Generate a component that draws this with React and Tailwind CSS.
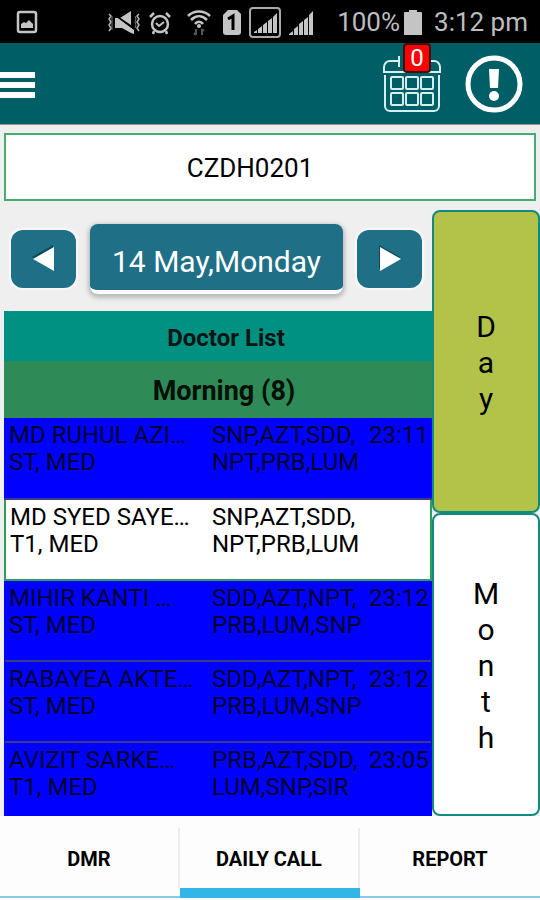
const visits = [
  {
    name: "MD RUHUL AZI…",
    info: "ST, MED",
    products: ["SNP,AZT,SDD,", "NPT,PRB,LUM"],
    time: "23:11",
  },
  {
    name: "MD SYED SAYE…",
    info: "T1, MED",
    products: ["SNP,AZT,SDD,", "NPT,PRB,LUM"],
    time: "",
  },
  {
    name: "MIHIR KANTI …",
    info: "ST, MED",
    products: ["SDD,AZT,NPT,", "PRB,LUM,SNP"],
    time: "23:12",
  },
  {
    name: "RABAYEA AKTE…",
    info: "ST, MED",
    products: ["SDD,AZT,NPT,", "PRB,LUM,SNP"],
    time: "23:12",
  },
  {
    name: "AVIZIT SARKE…",
    info: "T1, MED",
    products: ["PRB,AZT,SDD,", "LUM,SNP,SIR"],
    time: "23:05",
  },
];

const tabs = [
  { label: "DMR", active: false },
  { label: "DAILY CALL", active: true },
  { label: "REPORT", active: false },
];

const PictureIcon = () => (
  <svg width="22" height="24" viewBox="0 0 22 24" fill="none">
    <rect x="2" y="2" width="18" height="20" rx="2" stroke="#c4c4c4" strokeWidth="2.5" />
    <path d="M5 18v-4l3-2 2 1 3-3 3 3 1 1v4z" fill="#c4c4c4" />
  </svg>
);

const MuteIcon = () => (
  <svg width="34" height="24" viewBox="0 0 34 24" fill="none">
    <path
      d="M2 3l2 2-2 3 2 3-2 3 2 3-2 3M32 3l-2 2 2 3-2 3 2 3-2 3 2 3"
      stroke="#b5b5b5"
      strokeWidth="1.5"
    />
    <path d="M5 5v14M28 5l1 3-1 3 1 3-1 3" stroke="#777" strokeWidth="1" />
    <path d="M13 7l11-7v14z" fill="#c4c4c4" />
    <path d="M8 7h3l16 12v4l-3-1-9-5H8z" fill="#c4c4c4" />
    <path d="M11 6l15 11" stroke="#000" strokeWidth="1.5" />
  </svg>
);

const AlarmIcon = () => (
  <svg width="22" height="24" viewBox="0 0 22 24" fill="none" stroke="#c4c4c4">
    <circle cx="11" cy="13" r="8" strokeWidth="2.5" />
    <path d="M7 12l3 3 5-4" strokeWidth="2" />
    <path d="M1 6l4-4M21 6l-4-4M5 20l-1 3M17 20l1 3" strokeWidth="2.5" />
  </svg>
);

const WifiIcon = () => (
  <svg width="24" height="26" viewBox="0 0 24 26" fill="none">
    <path
      d="M1 6c6-6 16-6 22 0M4 10c5-5 11-5 16 0M8 14c2-3 6-3 8 0"
      stroke="#c4c4c4"
      strokeWidth="2.5"
    />
    <circle cx="12" cy="16" r="2" fill="#c4c4c4" />
    <path d="M9 19v6M7 23l2 2M15 25v-6M17 21l-2-2" stroke="#555" strokeWidth="2" />
  </svg>
);

const SimIcon = () => (
  <svg width="18" height="25" viewBox="0 0 18 25">
    <path d="M5 0h9l4 4v18a3 3 0 0 1-3 3H3a3 3 0 0 1-3-3V5z" fill="#c4c4c4" />
    <path d="M5 9l5-3v14" fill="none" stroke="#000" strokeWidth="3" />
  </svg>
);

const BoxedSignalIcon = () => (
  <svg width="32" height="31" viewBox="0 0 32 31">
    <rect x="1" y="1" width="30" height="29" rx="3" fill="none" stroke="#aaa" strokeWidth="2" />
    <path
      d="M5 26v-1l3-2v3zM9 26v-4l4-3v7zM14 26v-8l4-3v11zM19 26v-12l4-3v15zM24 26v-16l4-4v20z"
      fill="#c4c4c4"
    />
  </svg>
);

const SignalIcon = () => (
  <svg width="24" height="24" viewBox="0 0 24 24">
    <path
      d="M0 24v-1l4-3v4zM5 24v-6l4-3v9zM10 24v-11l4-3v14zM15 24v-15l4-3v18zM20 24v-20l4-4v24z"
      fill="#c4c4c4"
    />
  </svg>
);

const BatteryIcon = () => (
  <svg width="18" height="25" viewBox="0 0 18 25">
    <path d="M5 0h8v2h4a1 1 0 0 1 1 1v22H0V3a1 1 0 0 1 1-1h4z" fill="#c4c4c4" />
  </svg>
);

const CalendarIcon = () => (
  <svg width="58" height="58" viewBox="0 0 58 58" fill="none" stroke="#d5eeee" strokeWidth="2">
    <path d="M15 6H7a6 6 0 0 0-6 6v5h56v-5a6 6 0 0 0-6-6h-8" />
    <path d="M16 1v11M42 1v11" />
    <path d="M2 20v31a5 5 0 0 0 5 5h44a5 5 0 0 0 5-5V20" />
    {[22, 38].map((y) =>
      [8, 23, 38].map((x) => (
        <rect key={`${x}-${y}`} x={x} y={y} width="12" height="12" rx="1" />
      ))
    )}
  </svg>
);

const AlertIcon = () => (
  <svg width="58" height="58" viewBox="0 0 58 58">
    <circle cx="29" cy="29" r="26" fill="none" stroke="#fff" strokeWidth="5" />
    <path d="M24 14h10l-1 19h-8z" fill="#fff" />
    <circle cx="29" cy="41" r="5" fill="#fff" />
  </svg>
);

const StatusBar = () => (
  <div className="flex h-[43px] shrink-0 items-center justify-between bg-black px-3 pl-4 text-[26px] text-[#bdbdbd]">
    <PictureIcon />
    <div className="flex items-center pt-[2px]">
      <MuteIcon />
      <span className="ml-2">
        <AlarmIcon />
      </span>
      <span className="ml-4">
        <WifiIcon />
      </span>
      <span className="ml-3">
        <SimIcon />
      </span>
      <span className="ml-2">
        <BoxedSignalIcon />
      </span>
      <span className="ml-2">
        <SignalIcon />
      </span>
      <span className="ml-6">100%</span>
      <span className="ml-1">
        <BatteryIcon />
      </span>
      <span className="ml-3">3:12 pm</span>
    </div>
  </div>
);

const Header = () => (
  <header className="flex h-[82px] shrink-0 items-center justify-between border-b border-[#8f9a9c] bg-[#005f66] pr-[17px]">
    <button aria-label="Menu" className="flex w-[35px] flex-col gap-1 pt-[2px]">
      <span className="h-[6px] w-full bg-white" />
      <span className="h-[6px] w-full bg-white" />
      <span className="h-[6px] w-full bg-white" />
    </button>
    <div className="flex items-center gap-6">
      <button aria-label="Calendar" className="relative">
        <CalendarIcon />
        <span className="absolute -top-3 left-5 flex h-[30px] w-[28px] items-center justify-center rounded-sm border-2 border-[#3a1010] bg-[#ff0000] text-[24px] text-white">
          0
        </span>
      </button>
      <button aria-label="Alerts">
        <AlertIcon />
      </button>
    </div>
  </header>
);

const ArrowButton = ({ label, path }) => (
  <button
    aria-label={label}
    className="flex h-[58px] w-[65px] items-center justify-center rounded-xl bg-[#1f6f87] shadow-[0_0_2px_2px_#f8f8f8]"
  >
    <svg width="24" height="28" viewBox="0 0 24 28">
      <path d={path} fill="#0e4a5c" transform="translate(-1 -2)" />
      <path d={path} fill="#fff" />
    </svg>
  </button>
);

const DateNav = () => (
  <div className="flex h-[101px] shrink-0 items-center gap-[14px] pr-[10px] pb-1 pl-[7px]">
    <ArrowButton label="Previous day" path="M1 14L22 2v24z" />
    <button className="h-[70px] flex-1 rounded-lg border-b-4 border-white bg-[#1f6f87] pt-[10px] text-[30px] text-white shadow-[0_2px_4px_2px_#bbbbbb]">
      14 May,Monday
    </button>
    <ArrowButton label="Next day" path="M23 14L2 2v24z" />
  </div>
);

const VisitRow = ({ visit }) => {
  const done = visit.time !== "";
  return (
    <tr
      className={
        done
          ? "h-[81px] border-b-2 border-[#3b3b8c] bg-[#0000ff] text-[#000030]"
          : "h-[81px] border-2 border-[#2f9e5c] bg-white text-black"
      }
    >
      <td className="pt-1 pl-1 align-top">
        {visit.name}
        <br />
        {visit.info}
      </td>
      <td className="pt-1 align-top">
        {visit.products[0]}
        <br />
        {visit.products[1]}
      </td>
      <td className="pt-1 align-top">{visit.time}</td>
    </tr>
  );
};

const DoctorList = () => (
  <section className="flex min-h-0 flex-1 flex-col">
    <h2 className="flex h-[50px] shrink-0 items-center justify-center bg-[#009182] pt-1 pl-4 text-[24px] font-bold text-[#0a1414]">
      Doctor List
    </h2>
    <h3 className="flex h-[57px] shrink-0 items-center justify-center bg-[#2e8b57] pt-1 pl-3 text-[27px] font-bold text-[#061006]">
      Morning (8)
    </h3>
    <div className="min-h-0 flex-1 overflow-hidden bg-[#0000ff]">
      <table className="w-full table-fixed border-collapse text-[24px] leading-[27px] whitespace-nowrap">
        <colgroup>
          <col />
          <col className="w-[157px]" />
          <col className="w-[62px]" />
        </colgroup>
        <tbody>
          {visits.map((visit) => (
            <VisitRow key={visit.name} visit={visit} />
          ))}
        </tbody>
      </table>
    </div>
  </section>
);

const PeriodButton = ({ label, active }) => (
  <button
    aria-label={label}
    className={
      active
        ? "flex flex-1 flex-col items-center justify-center rounded-lg border-2 border-[#128a80] bg-[#b3c34a] pt-[2px] text-[30px] leading-[36px]"
        : "flex flex-1 flex-col items-center justify-center rounded-lg border-2 border-[#128a80] bg-white pt-[2px] text-[30px] leading-[36px]"
    }
  >
    {label.split("").map((letter, i) => (
      <span key={i}>{letter}</span>
    ))}
  </button>
);

const TabBar = () => (
  <nav className="flex h-[84px] shrink-0 bg-[#fdfdfd] pb-[2px]">
    {tabs.map(({ label, active }, i) => (
      <button key={label} className="flex flex-1 flex-col text-xl font-bold">
        <span
          className={
            i < tabs.length - 1
              ? "mt-3 flex h-[60px] w-full items-center justify-center border-r-2 border-[#ececec] pt-[2px]"
              : "mt-3 flex h-[60px] w-full items-center justify-center pt-[2px]"
          }
        >
          {label}
        </span>
        <span
          className={
            active ? "h-[10px] w-full bg-[#33b5e5]" : "mt-2 h-[2px] w-full bg-[#8cc8ea]"
          }
        />
      </button>
    ))}
  </nav>
);

export default function App() {
  return (
    <div className="flex h-screen flex-col bg-[#efefef] font-['Roboto',sans-serif] text-black">
      <StatusBar />
      <Header />
      <div className="shrink-0 px-1 pt-2">
        <input
          type="text"
          aria-label="Territory code"
          defaultValue="CZDH0201"
          className="block h-[68px] w-full border-2 border-[#45ad72] bg-white pt-[2px] pr-10 text-center text-[26px]"
        />
      </div>
      <main className="flex min-h-0 flex-1 pt-[9px] pl-1">
        <div className="flex min-w-0 flex-1 flex-col">
          <DateNav />
          <DoctorList />
        </div>
        <div className="flex w-[108px] shrink-0 flex-col">
          <PeriodButton label="Day" active />
          <PeriodButton label="Month" />
        </div>
      </main>
      <TabBar />
    </div>
  );
}
